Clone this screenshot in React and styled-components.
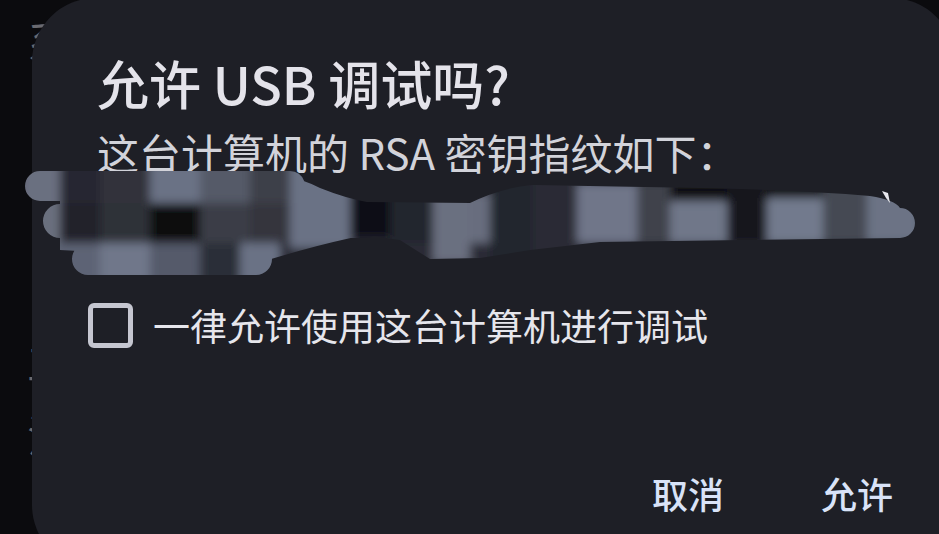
import React from "react";
import styled, { createGlobalStyle } from "styled-components";

const GlobalStyle = createGlobalStyle`
  html, body {
    margin: 0;
    padding: 0;
    background: #0b0b0e;
    overflow: hidden;
  }
  body {
    font-family: "Noto Sans CJK SC", "Noto Sans", sans-serif;
  }
`;

const Screen = styled.div`
  position: relative;
  width: 939px;
  height: 534px;
  overflow: hidden;
  background: #0b0b0e;
`;

/* settings list that sits behind the dialog */
const BehindList = styled.div`
  display: flex;
  flex-direction: column;
  padding-left: 27px;
`;

const BehindLine = styled.div`
  margin-top: ${(p) => p.$top}px;
  font-size: 44px;
  line-height: 52px;
  color: #6a6a70;
  white-space: nowrap;
`;

const Dialog = styled.div`
  position: absolute;
  left: 32px;
  top: -2px;
  width: 923px;
  height: 571px;
  box-sizing: border-box;
  padding: 55px 62px 0 65px;
  border-radius: 64px;
  background: #1e1f26;
  display: flex;
  flex-direction: column;
`;

const Title = styled.h1`
  margin: 0;
  font-size: 52px;
  line-height: 60px;
  font-weight: 500;
  color: #e4e3ea;
  white-space: nowrap;
`;

const Message = styled.p`
  margin: 14px 0 0;
  font-size: 42px;
  line-height: 50px;
  font-weight: 400;
  color: #d2d3da;
  white-space: nowrap;
`;

const Fingerprint = styled.svg`
  display: block;
  flex: none;
  margin: -14px 0 0 -77px;
`;

const CheckRow = styled.label`
  display: flex;
  align-items: center;
  gap: 20px;
  margin: 20px 0 0 -9px;
`;

const Box = styled.span`
  width: 45px;
  height: 45px;
  box-sizing: border-box;
  border: 5px solid #c5c6d0;
  border-radius: 6px;
  flex: none;
`;

const CheckLabel = styled.span`
  font-size: 37px;
  line-height: 45px;
  color: #e6e6ec;
  white-space: nowrap;
`;

const Actions = styled.div`
  display: flex;
  justify-content: flex-end;
  gap: 97px;
  margin-top: 121px;
`;

const ActionButton = styled.button`
  padding: 0;
  border: none;
  background: none;
  font-family: inherit;
  font-size: 36px;
  line-height: 48px;
  font-weight: 500;
  color: #d9e3f8;
  cursor: pointer;
`;

/* mosaic cells of the obscured key fingerprint: [x, y, w, h, colour] */
const cells = [
  [20, 165, 40, 40, "#6b7080"],
  [60, 165, 40, 40, "#262830"],
  [100, 165, 50, 40, "#30323a"],
  [150, 165, 50, 40, "#6b7285"],
  [200, 165, 50, 40, "#555a68"],
  [250, 165, 40, 40, "#3d3f4a"],
  [290, 165, 60, 40, "#6b7285"],
  [20, 205, 40, 40, "#6a6f7e"],
  [60, 205, 40, 40, "#22242b"],
  [100, 205, 50, 40, "#2f3139"],
  [150, 205, 50, 40, "#0b0b10"],
  [200, 205, 50, 40, "#3a3c46"],
  [250, 205, 40, 40, "#34353e"],
  [290, 205, 60, 45, "#6b7285"],
  [350, 195, 40, 45, "#0e0e14"],
  [390, 195, 43, 50, "#23252d"],
  [433, 195, 37, 70, "#6b7080"],
  [470, 195, 20, 50, "#676d7e"],
  [490, 185, 43, 80, "#23252d"],
  [533, 185, 44, 70, "#2a2c34"],
  [577, 185, 60, 60, "#6f7689"],
  [637, 185, 33, 60, "#3f424c"],
  [670, 185, 57, 18, "#0c0c10"],
  [670, 203, 57, 42, "#707789"],
  [727, 185, 40, 60, "#14151a"],
  [767, 185, 56, 15, "#0a0a0e"],
  [767, 200, 56, 45, "#727a8d"],
  [823, 185, 44, 60, "#454852"],
  [867, 185, 53, 60, "#6c7385"],
  [20, 245, 80, 40, "#5d6375"],
  [100, 245, 50, 40, "#6f778a"],
  [150, 245, 50, 40, "#545a6a"],
  [200, 245, 40, 40, "#2c2e38"],
  [240, 245, 40, 40, "#6b7285"],
];

function FingerprintSmear() {
  return (
    <Fingerprint width="900" height="120" viewBox="20 165 900 120">
      <defs>
        <clipPath id="smear-shape">
          <rect x="25" y="173" width="280" height="30" rx="15" />
          <rect x="43" y="206" width="340" height="34" rx="17" />
          <rect x="72" y="245" width="200" height="32" rx="16" />
          <path d="M60 176 L250 173 Q295 177 320 190 Q345 200 367 204 L470 205 Q500 190 533 187 L700 190 Q800 192 870 198 Q895 202 900 210 A15 15 0 0 1 900 240 L600 244 L530 252 L480 260 L430 261 L400 242 L365 237 Q320 246 268 262 L60 252 Z" />
        </clipPath>
        <filter id="smear-blur" filterUnits="userSpaceOnUse" x="0" y="150" width="960" height="150">
          <feGaussianBlur stdDeviation="5" />
        </filter>
      </defs>
      <g clipPath="url(#smear-shape)">
        <g filter="url(#smear-blur)">
          <rect x="10" y="155" width="920" height="140" fill="#2a2c34" />
          {cells.map(([x, y, w, h, c], i) => (
            <rect key={i} x={x} y={y} width={w} height={h} fill={c} />
          ))}
        </g>
      </g>
      <polygon points="882,193 888,195 890,205 886,200" fill="#e8e8ee" />
    </Fingerprint>
  );
}

export default function App() {
  return (
    <>
      <GlobalStyle />
      <Screen>
        <BehindList>
          <BehindLine $top={14}>系</BehindLine>
          <BehindLine $top={267}>主</BehindLine>
          <BehindLine $top={23}>法</BehindLine>
        </BehindList>
        <Dialog role="dialog" aria-modal="true">
          <Title>允许 USB 调试吗?</Title>
          <Message>这台计算机的 RSA 密钥指纹如下：</Message>
          <FingerprintSmear />
          <CheckRow>
            <Box />
            <CheckLabel>一律允许使用这台计算机进行调试</CheckLabel>
          </CheckRow>
          <Actions>
            <ActionButton>取消</ActionButton>
            <ActionButton>允许</ActionButton>
          </Actions>
        </Dialog>
      </Screen>
    </>
  );
}
